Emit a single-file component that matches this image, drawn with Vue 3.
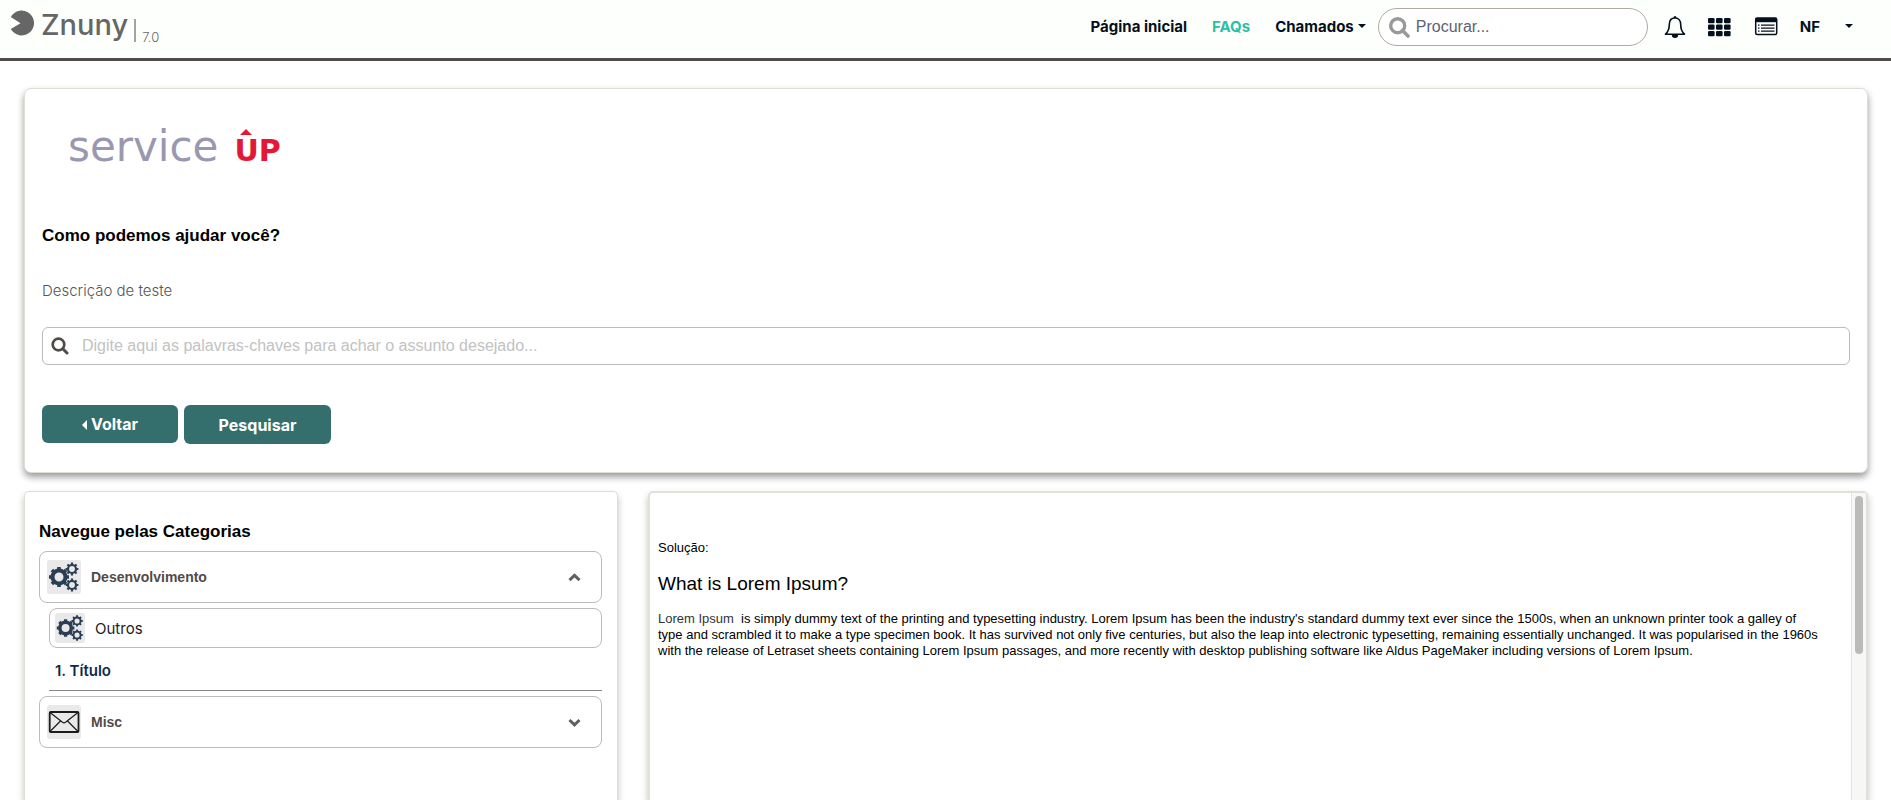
<script setup>
import { ref } from 'vue'

const globalQuery = ref('')
const keywords = ref('')

const toothAngles = [0, 45, 90, 135]
const gears = [
  { x: 12, y: 17, r: 6.5, w: 4, tooth: 10, tw: 3.6 },
  { x: 25, y: 9, r: 4, w: 2.2, tooth: 6.4, tw: 2.2 },
  { x: 25, y: 25, r: 4, w: 2.2, tooth: 6.4, tw: 2.2 },
]
</script>

<template>
  <div class="page">
    <header class="topbar">
      <a class="brand" href="#" aria-label="Znuny 7.0">
        <svg class="brand-mark" viewBox="0 0 25 26" aria-hidden="true">
          <path d="M0.8 7A12.4 12.4 0 1 1 0.8 19L10.5 13.2Z" fill="#666" />
        </svg>
        <span class="brand-name">Znuny</span>
        <span class="brand-bar"></span>
        <span class="brand-version">7.0</span>
      </a>
      <nav class="menu">
        <a href="#">Página inicial</a>
        <a href="#" class="active">FAQs</a>
        <a href="#">Chamados<span class="caret"></span></a>
      </nav>
      <label class="global-search">
        <svg viewBox="0 0 21 21" width="21" height="21" aria-hidden="true">
          <circle cx="8.7" cy="8.7" r="7" fill="none" stroke="#999" stroke-width="3.4" />
          <path d="M13.5 13.5L19 19" stroke="#999" stroke-width="3.6" stroke-linecap="round" />
        </svg>
        <input v-model="globalQuery" type="text" placeholder="Procurar..." aria-label="Procurar" />
      </label>
      <div class="tools">
        <button type="button" aria-label="Notificações">
          <svg viewBox="0 0 22 24" width="22" height="24" aria-hidden="true">
            <path d="M11 3C7 3 5.3 6 5.3 9.5C5.3 14.5 4 17 1.5 19.2H20.5C18 17 16.7 14.5 16.7 9.5C16.7 6 15 3 11 3Z" fill="none" stroke="#04111d" stroke-width="1.6" stroke-linejoin="round" />
            <path d="M9.5 3A1.5 1.9 0 0 1 12.5 3ZM7.8 20H14.2A3.2 3 0 0 1 7.8 20Z" fill="#04111d" />
          </svg>
        </button>
        <button type="button" aria-label="Aplicativos">
          <svg viewBox="0 0 24 24" width="24" height="24" fill="#04111d" aria-hidden="true">
            <template v-for="row in 3" :key="row">
              <rect v-for="col in 3" :key="col" :x="(col - 1) * 8" :y="row * 6.5 - 3.5" width="6.6" height="5.2" rx="1.2" />
            </template>
          </svg>
        </button>
        <button type="button" aria-label="Painel">
          <svg viewBox="0 0 24 24" width="24" height="24" aria-hidden="true">
            <rect x="1.7" y="3" width="21" height="16.6" rx="1.5" fill="none" stroke="#04111d" stroke-width="1.5" />
            <path d="M1.5 3H23V7.2H1.5Z" fill="#04111d" />
            <path d="M4 10.200H5.500M7 10.200H20.500M4 13.200H5.500M7 13.200H20.500M4 16.200H5.500M7 16.200H20.500" stroke="#04111d" stroke-width="1.3" />
          </svg>
        </button>
        <button type="button" class="user">NF<span class="caret"></span></button>
      </div>
    </header>

    <main class="content">
      <section class="card hero">
        <div class="logo">
          <span class="logo-service">service</span>
          <span class="logo-up">
            <svg class="logo-arrow" viewBox="0 0 12 6" aria-hidden="true"><path d="M0 6L6 0L12 6Z" fill="#e31837" /></svg>UP</span>
        </div>
        <h1>Como podemos ajudar você?</h1>
        <p class="description">Descrição de teste</p>
        <label class="keyword-search">
          <svg viewBox="0 0 18 18" width="18" height="18" aria-hidden="true">
            <circle cx="7.5" cy="7.5" r="5.8" fill="none" stroke="#524a48" stroke-width="2.7" />
            <path d="M11.8 11.8L16 16" stroke="#524a48" stroke-width="3" stroke-linecap="round" />
          </svg>
          <input v-model="keywords" type="text" placeholder="Digite aqui as palavras-chaves para achar o assunto desejado..." aria-label="Palavras-chaves" />
        </label>
        <div class="actions">
          <button type="button" class="back"><span class="back-arrow"></span>Voltar</button>
          <button type="button" class="submit">Pesquisar</button>
        </div>
      </section>

      <div class="columns">
        <aside class="card categories">
          <h2>Navegue pelas Categorias</h2>
          <button type="button" class="category">
            <span class="thumb">
              <svg viewBox="0 0 34 34" aria-hidden="true" stroke="#2c3e54" fill="none">
                <g v-for="(g, i) in gears" :key="i" :transform="`translate(${g.x} ${g.y})`">
                  <circle :r="g.r" :stroke-width="g.w" />
                  <g v-for="a in toothAngles" :key="a" :transform="`rotate(${a})`" :stroke-width="g.tw">
                    <path :d="`M${-g.tooth} 0H${-g.r}M${g.r} 0H${g.tooth}`" />
                  </g>
                </g>
              </svg>
            </span>
            <span class="category-name">Desenvolvimento</span>
            <svg class="chevron" viewBox="0 0 13 9" aria-hidden="true"><path d="M1.5 7.2L6.5 2.4L11.5 7.2" /></svg>
          </button>
          <button type="button" class="subcategory">
            <span class="thumb small">
              <svg viewBox="0 0 34 34" aria-hidden="true" stroke="#2c3e54" fill="none">
                <g v-for="(g, i) in gears" :key="i" :transform="`translate(${g.x} ${g.y})`">
                  <circle :r="g.r" :stroke-width="g.w" />
                  <g v-for="a in toothAngles" :key="a" :transform="`rotate(${a})`" :stroke-width="g.tw">
                    <path :d="`M${-g.tooth} 0H${-g.r}M${g.r} 0H${g.tooth}`" />
                  </g>
                </g>
              </svg>
            </span>
            <span>Outros</span>
          </button>
          <a class="article-link" href="#">1. Título</a>
          <button type="button" class="category">
            <span class="thumb">
              <svg viewBox="0 0 34 34" aria-hidden="true" fill="none" stroke="#1c1c1c">
                <rect x="2.7" y="7" width="28.8" height="20" rx="1" stroke-width="1.8" />
                <path d="M3 7.5L15.5 17.3Q17 18.3 18.5 17.3L31 7.5M3 26.5L13.5 16M31 26.5L20.5 16" stroke-width="1.2" />
              </svg>
            </span>
            <span class="category-name">Misc</span>
            <svg class="chevron" viewBox="0 0 13 9" aria-hidden="true"><path d="M1.5 2L6.5 6.8L11.5 2" /></svg>
          </button>
        </aside>

        <article class="card answer">
          <div class="answer-body">
            <p>Solução:</p>
            <h3>What is Lorem Ipsum?</h3>
            <p><span class="lead">Lorem Ipsum</span>&nbsp; is simply dummy text of the printing and typesetting industry. Lorem Ipsum has been the industry's standard dummy text ever since the 1500s, when an unknown printer took a galley of<br />type and scrambled it to make a type specimen book. It has survived not only five centuries, but also the leap into electronic typesetting, remaining essentially unchanged. It was popularised in the 1960s<br />with the release of Letraset sheets containing Lorem Ipsum passages, and more recently with desktop publishing software like Aldus PageMaker including versions of Lorem Ipsum.</p>
          </div>
          <div class="scroll-track"><div class="scroll-thumb"></div></div>
        </article>
      </div>
    </main>
  </div>
</template>

<style>
body {
  margin: 0;
}
</style>

<style scoped>
* {
  box-sizing: border-box;
}
.page {
  height: 100vh;
  overflow: hidden;
  display: flex;
  flex-direction: column;
  background: #fff;
  color: #000;
  font-family: Inter, sans-serif;
  font-size: 15px;
}
a {
  color: inherit;
  text-decoration: none;
}
button {
  font: inherit;
  color: inherit;
  background: none;
  border: 0;
  padding: 0;
}
input {
  flex: 1;
  min-width: 0;
  border: 0;
  padding: 0;
  outline: 0;
  background: none;
  font: 16px "Liberation Sans", sans-serif;
}
h1,
h2,
h3,
p {
  margin: 0;
}
h1,
h2 {
  font: bold 17px/24px "Liberation Sans", sans-serif;
}
.topbar {
  flex: none;
  display: flex;
  align-items: flex-start;
  padding: 8px 38px 12px 10px;
  background: #fdfffc;
  border-bottom: 3px solid #524a48;
  color: #04111d;
}
.brand {
  display: flex;
  align-items: flex-end;
  height: 34px;
  color: #666;
}
.brand-mark {
  width: 25px;
  height: 26px;
  margin-bottom: 6px;
}
.brand-name {
  margin-left: 6px;
  font-size: 29px;
  font-weight: 500;
  line-height: 34px;
}
.brand-bar {
  width: 2px;
  height: 23px;
  margin: 0 6px;
  background: #a3a3a3;
}
.brand-version {
  font-size: 13px;
  font-weight: 300;
  line-height: 10px;
}
.menu {
  display: flex;
  gap: 25px;
  margin: 0 12px 0 auto;
  line-height: 38px;
  font-weight: 700;
}
.menu .active {
  color: #2bbfa8;
}
.caret {
  display: inline-block;
  border: 4px solid transparent;
  border-top-color: currentColor;
  border-bottom: 0;
  vertical-align: 4px;
  margin-left: 4px;
}
.global-search {
  display: flex;
  align-items: center;
  gap: 6px;
  width: 270px;
  height: 38px;
  padding: 0 12px 0 10px;
  border: 1px solid #b0aaa5;
  border-radius: 19px;
  background: #fff;
}
.global-search input::placeholder {
  color: #5c6470;
  opacity: 1;
}
.tools {
  display: flex;
  align-items: center;
  height: 38px;
  margin-left: 16px;
  gap: 22px;
}
.tools svg {
  display: block;
}
.user {
  font-weight: 700;
  line-height: 34px;
  height: 38px;
}
.user .caret {
  margin-left: 25px;
}
.content {
  flex: 1;
  display: flex;
  flex-direction: column;
  gap: 18px;
  padding: 27px 23px 0 24px;
  min-height: 0;
}
.card {
  border: 1px solid #deddd6;
  border-radius: 7px;
  background: #fff;
  box-shadow: 0 4px 7px rgba(0, 0, 0, 0.25);
}
.hero {
  flex: none;
  padding: 36px 17px 28px;
  box-shadow: 0 4px 7px rgba(0, 0, 0, 0.4);
}
.logo {
  display: flex;
  align-items: baseline;
  gap: 16px;
  margin-left: 26px;
  font-family: "DejaVu Sans", sans-serif;
  line-height: 44px;
}
.logo-service {
  font-size: 42px;
  color: #9a98b0;
}
.logo-up {
  position: relative;
  font-size: 30px;
  font-weight: 700;
  color: #e31837;
}
.logo-arrow {
  position: absolute;
  left: 6px;
  top: 0;
  width: 12px;
  height: 6px;
}
h1 {
  margin-top: 51px;
}
.description {
  margin-top: 33px;
  line-height: 20px;
  font-weight: 300;
  color: #555;
}
.keyword-search {
  display: flex;
  align-items: center;
  gap: 13px;
  height: 38px;
  margin-top: 26px;
  padding: 0 9px 0 8px;
  border: 1px solid #bbb;
  border-radius: 6px;
}
.keyword-search input::placeholder {
  color: #c2c2c2;
  opacity: 1;
}
.actions {
  display: flex;
  align-items: flex-start;
  gap: 6px;
  margin-top: 40px;
}
.actions button {
  border-radius: 6px;
  background: #356f6d;
  color: #fff;
  font-size: 16px;
  font-weight: 700;
}
.back {
  width: 136px;
  height: 38px;
}
.submit {
  width: 147px;
  height: 39px;
}
.back-arrow {
  display: inline-block;
  border: 5px solid transparent;
  border-right-color: #fff;
  border-left: 0;
  margin-right: 4px;
}
.columns {
  flex: 1;
  min-height: 0;
  display: grid;
  grid-template-columns: 594fr 1220fr;
  gap: 30px;
}
.columns .card {
  border-bottom: 0;
  border-radius: 5px 5px 0 0;
}
.categories {
  display: flex;
  flex-direction: column;
  padding: 28px 15px 0 14px;
}
.category,
.subcategory {
  display: flex;
  align-items: center;
  border: 1px solid #bbb;
  border-radius: 8px;
  text-align: left;
}
.category {
  height: 52px;
  padding: 0 20px 0 7px;
  margin-top: 7px;
}
.category-name {
  flex: 1;
  margin-left: 10px;
  font: bold 14px "Liberation Sans", sans-serif;
  color: #524a48;
}
.thumb {
  width: 34px;
  height: 34px;
  border-radius: 3px;
  background: #e9e9e9;
}
.thumb svg {
  display: block;
  width: 100%;
  height: 100%;
}
.thumb.small {
  width: 30px;
  height: 30px;
  margin-right: 10px;
}
.subcategory {
  height: 40px;
  margin: 5px 0 0 10px;
  padding: 0 5px;
  color: #222;
}
.article-link {
  margin-left: 10px;
  padding: 12px 6px 8px;
  border-bottom: 1px solid #888;
  line-height: 22px;
  font-weight: 600;
  color: #0c2b4c;
}
.article-link + .category {
  margin-top: 5px;
}
.chevron {
  width: 13px;
  height: 9px;
  fill: none;
  stroke: #606060;
  stroke-width: 3;
}
.columns .answer {
  display: flex;
  border: 2px solid #e3e0da;
  border-bottom: 0;
  min-width: 0;
}
.answer-body {
  flex: 1;
  min-width: 0;
  padding: 47px 4px 0 8px;
  overflow: hidden;
  font: 13px/16px "Liberation Sans", sans-serif;
}
.answer-body h3 {
  margin: 16px 0 15px;
  font-size: 19px;
  font-weight: 400;
  line-height: 24px;
}
.lead {
  color: #333;
}
.scroll-track {
  flex: none;
  width: 15px;
  padding: 3px 3px 0;
  border-left: 1px solid #e3e3e3;
  background: #f7f7f7;
}
.scroll-thumb {
  height: 158px;
  border-radius: 4px;
  background: #bababa;
}
</style>
